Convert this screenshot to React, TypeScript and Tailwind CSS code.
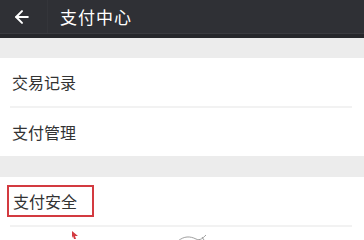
import { ArrowLeft } from 'lucide-react'

const font = { fontFamily: '"Noto Sans CJK SC", "Noto Sans", sans-serif' }

function Row({ label, divider, boxed }: { label: string; divider?: boolean; boxed?: boolean }) {
  return (
    <div className="bg-white">
      <div className="h-[48px] flex items-center pl-[12px]">
        {boxed ? (
          <span className="-ml-[5px] px-[4px] h-[32px] w-[87px] flex items-center border-2 border-[#d33a40] text-[16px] text-[#333]">
            {label}
          </span>
        ) : (
          <span className="text-[16px] text-[#333]">{label}</span>
        )}
      </div>
      {divider && <div className="ml-[10px] mr-[12px] h-[2px] bg-[#f2f2f2]" />}
    </div>
  )
}

export default function App() {
  return (
    <div className="w-[364px] h-[240px] overflow-hidden bg-[#ececec]" style={font}>
      <div className="h-[33px] bg-[#2f3035] flex items-center">
        <div className="w-[48px] h-full flex items-center pl-[12px] border-r border-[#34353a]">
          <ArrowLeft size={20} strokeWidth={2.4} color="#fff" />
        </div>
        <span className="ml-[12px] text-[17px] text-white tracking-[1px]">支付中心</span>
      </div>
      <div className="h-[5px] bg-[#26272b] border-t border-[#3a3b40]" />
      <div className="h-[20px]" />
      <Row label="交易记录" divider />
      <Row label="支付管理" />
      <div className="h-[21px]" />
      <Row label="支付安全" divider boxed />
      <div className="bg-white h-[20px] relative">
        <svg className="absolute left-[70px] top-[3px]" width="10" height="10" viewBox="0 0 10 10">
          <path d="M2 1 L8 6 L5 6 L6 9 L4 9 L3 6 L2 8 Z" fill="#d33a40" />
        </svg>
        <svg className="absolute left-[176px] top-[6px]" width="32" height="14" viewBox="0 0 32 14">
          <path d="M2 8 C8 3 14 3 20 6 C24 8 27 5 30 2 M4 12 C10 8 16 9 22 10 M26 4 L30 10" stroke="#888" strokeWidth="0.8" fill="none" />
        </svg>
      </div>
    </div>
  )
}
